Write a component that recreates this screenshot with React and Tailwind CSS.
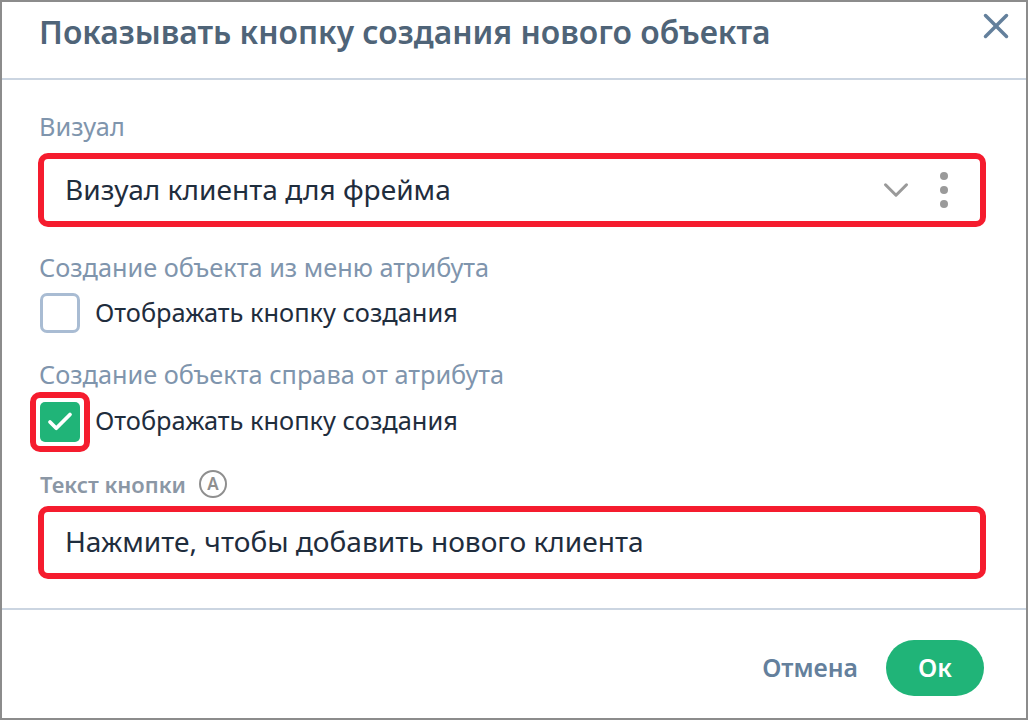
import React from 'react';
import { X, ChevronDown, Check } from 'lucide-react';

const fieldLabel = 'text-[25.3px] leading-[32px] text-[#7f95ad]';
const checkText = 'text-[25.4px] leading-[32px] text-[#1f2d3d]';

const App = () => {
    return (
        <div className="w-[1028px] h-[720px] bg-white border-2 border-[#8c8c8c] flex flex-col font-['Noto_Sans',sans-serif] overflow-hidden">
            {/* Header */}
            <header className="h-[78px] shrink-0 border-b-2 border-[#cbd5e1] flex items-start justify-between pl-[37px] pr-[9px]">
                <h1 className="mt-[10px] text-[31.8px] leading-[40px] font-semibold text-[#4f6478]">
                    Показывать кнопку создания нового объекта
                </h1>
                <X size={42} strokeWidth={2} className="mt-[3px] text-[#64809c]" />
            </header>

            {/* Body */}
            <main className="flex-1 flex flex-col pl-[36px] pr-[40px]">
                <div className={`${fieldLabel} ml-[1px] mt-[30px]`}>Визуал</div>
                <div className="mt-[11px] h-[74px] border-[6px] border-[#f51c2e] rounded-[10px] flex items-center pl-[21px] pr-[32px]">
                    <span className="flex-1 pb-[2px] text-[28.1px] text-[#1f2d3d]">Визуал клиента для фрейма</span>
                    <ChevronDown size={42} strokeWidth={1.75} className="text-[#9a9a9a]" />
                    <div className="ml-[23px] flex flex-col gap-[6px]">
                        <span className="w-2 h-2 rounded-full bg-[#9a9a9a]" />
                        <span className="w-2 h-2 rounded-full bg-[#9a9a9a]" />
                        <span className="w-2 h-2 rounded-full bg-[#9a9a9a]" />
                    </div>
                </div>

                <div className={`${fieldLabel} ml-[1px] mt-[24px]`}>Создание объекта из меню атрибута</div>
                <div className="ml-[2px] mt-[10px] flex items-center">
                    <div className="w-10 h-10 rounded-[7px] border-[3px] border-[#a9bcd3]" />
                    <span className={`${checkText} ml-[15px] pb-[2px]`}>Отображать кнопку создания</span>
                </div>

                <div className={`${fieldLabel} ml-[1px] mt-[25px]`}>Создание объекта справа от атрибута</div>
                <div className="-ml-[8px] mt-[2px] flex items-center">
                    <div className="w-[60px] h-[60px] border-[6px] border-[#f51c2e] rounded-[10px] flex items-center justify-center">
                        <div className="w-10 h-10 shrink-0 rounded-[5px] bg-[#20b478] flex items-center justify-center">
                            <Check size={30} strokeWidth={3} className="text-white" />
                        </div>
                    </div>
                    <span className={`${checkText} ml-[5px] pb-[4px]`}>Отображать кнопку создания</span>
                </div>

                <div className="ml-[2px] mt-[16px] flex items-center gap-[13px] h-[32px]">
                    <span className="text-[22px] font-semibold text-[#8b97a5]">Текст кнопки</span>
                    <span className="w-[28px] h-[28px] rounded-full border-2 border-[#8f8f8f] flex items-center justify-center text-[17px] font-semibold text-[#8f8f8f]">A</span>
                </div>
                <div className="mt-[6px] h-[73px] border-[6px] border-[#f51c2e] rounded-[10px] flex items-center pl-[21px]">
                    <span className="pb-[2px] text-[28.1px] text-[#1f2d3d]">Нажмите, чтобы добавить нового клиента</span>
                </div>
            </main>

            {/* Footer */}
            <footer className="h-[110px] shrink-0 border-t-2 border-[#cbd5e1] flex items-center justify-end pr-[42px] pt-[8px]">
                <button className="mr-[28px] text-[24.8px] font-semibold text-[#64809c]">Отмена</button>
                <button className="w-[98px] h-[56px] rounded-full bg-[#20b478] text-white text-[25px] font-semibold">Ок</button>
            </footer>
        </div>
    );
};

export default App;
